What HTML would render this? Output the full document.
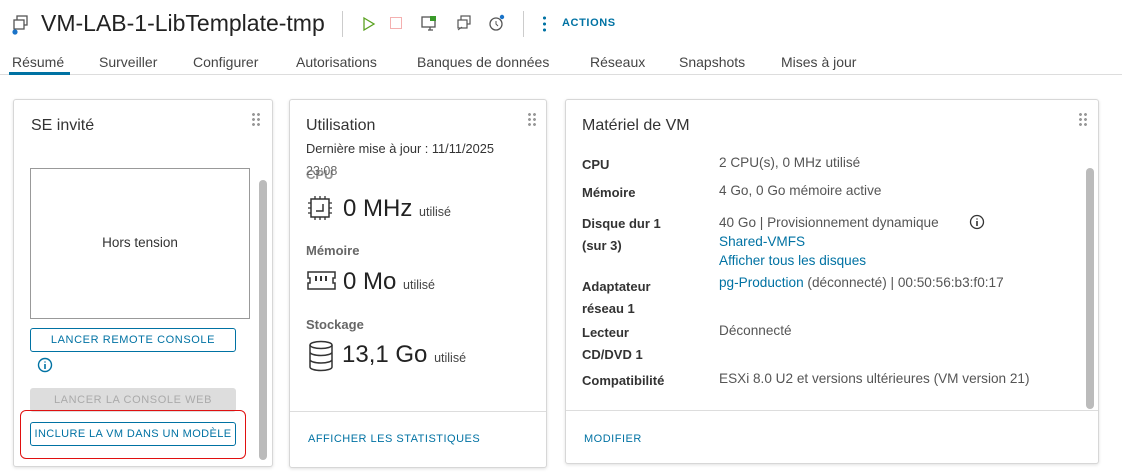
<!DOCTYPE html>
<html><head><meta charset="utf-8"><style>
*{box-sizing:border-box;margin:0;padding:0}
body{width:1122px;height:474px;overflow:hidden;background:#fff;font-family:"Liberation Sans",sans-serif;color:#333;position:relative}
.a{position:absolute;white-space:nowrap}
.card{position:absolute;background:#fff;border:1px solid #d7d7d7;border-radius:3px;box-shadow:0 1px 3px rgba(0,0,0,.12)}
.ttl{font-size:16px;color:#333}
.lbl{font-size:13px;color:#333;font-weight:bold}
.val{font-size:13.6px;color:#555}
.lnk{color:#0072a3}
.btn{position:absolute;border:1px solid #0072a3;border-radius:3px;color:#0072a3;font-size:11px;letter-spacing:.6px;text-align:center;line-height:22px;height:24px}
.dots{position:absolute;width:10px;height:14px;background:radial-gradient(circle,#999 1.3px,transparent 1.6px) 0 0/5px 5px}
.tab{position:absolute;top:54px;font-size:14px;color:#444}
</style></head><body>
<svg class="a" style="left:12px;top:13px" width="20" height="22" viewBox="0 0 20 22"><rect x="5" y="3" width="10" height="9" fill="none" stroke="#555" stroke-width="1.3"/><rect x="2" y="7" width="10" height="9" fill="#fff" stroke="#555" stroke-width="1.3"/><circle cx="3" cy="19" r="2.6" fill="#1a73c8"/></svg>
<div class="a" style="left:41px;top:10px;font-size:23px;color:#222">VM-LAB-1-LibTemplate-tmp</div>
<div class="a" style="left:342px;top:11px;width:1px;height:26px;background:#ccc"></div>
<svg class="a" style="left:362px;top:16px" width="14" height="16"><path d="M2 2 L12 8 L2 14Z" fill="none" stroke="#5aa220" stroke-width="1.3"/></svg>
<div class="a" style="left:390px;top:17px;width:12px;height:12px;border:1px solid #f4b0b0"></div>
<svg class="a" style="left:420px;top:14px" width="18" height="18"><rect x="2" y="3" width="13" height="10" fill="none" stroke="#555" stroke-width="1.3"/><path d="M8 16h5M10 13v3" stroke="#555" stroke-width="1.3"/><rect x="10" y="2" width="6" height="5" fill="#3a9a2a"/></svg>
<svg class="a" style="left:455px;top:14px" width="18" height="18"><rect x="6" y="2" width="9" height="8" fill="none" stroke="#555" stroke-width="1.2"/><rect x="3" y="6" width="9" height="8" fill="#fff" stroke="#555" stroke-width="1.2"/><path d="M3 16l4-3" stroke="#555"/></svg>
<svg class="a" style="left:488px;top:13px" width="18" height="20"><circle cx="8" cy="11" r="6" fill="none" stroke="#555" stroke-width="1.3"/><path d="M8 8v3l2 2" stroke="#555" fill="none"/><circle cx="14" cy="4" r="2.2" fill="#1a73c8"/></svg>
<div class="a" style="left:523px;top:11px;width:1px;height:26px;background:#ccc"></div>
<div class="a" style="left:543px;top:15px;width:3px;height:17px;background:radial-gradient(circle,#0072a3 1.4px,transparent 1.7px) 0 0/3px 6px"></div>
<div class="a" style="left:562px;top:17px;font-size:11px;color:#0072a3;letter-spacing:.6px;font-weight:bold">ACTIONS</div>
<div class="tab" style="left:12px">Résumé</div>
<div class="tab" style="left:99px">Surveiller</div>
<div class="tab" style="left:193px">Configurer</div>
<div class="tab" style="left:296px">Autorisations</div>
<div class="tab" style="left:417px">Banques de données</div>
<div class="tab" style="left:590px">Réseaux</div>
<div class="tab" style="left:679px">Snapshots</div>
<div class="tab" style="left:781px">Mises à jour</div>
<div class="a" style="left:0;top:74px;width:1122px;height:1px;background:#ddd"></div>
<div class="a" style="left:9px;top:72px;width:61px;height:3px;background:#0072a3"></div>

<div class="card" style="left:13px;top:99px;width:260px;height:368px">
 <div class="a ttl" style="left:17px;top:17px">SE invité</div>
 <div class="dots" style="left:237px;top:12px"></div>
 <div class="a" style="left:245px;top:80px;width:8px;height:280px;background:#bbb;border-radius:4px"></div>
 <div class="a" style="left:16px;top:68px;width:220px;height:151px;border:1px solid #999;text-align:center;line-height:148px;font-size:13.5px;color:#333">Hors tension</div>
 <div class="btn" style="left:16px;top:228px;width:206px">LANCER REMOTE CONSOLE</div>
 <svg class="a" style="left:23px;top:257px" width="16" height="16"><circle cx="8" cy="8" r="6.5" fill="none" stroke="#0072a3" stroke-width="1.4"/><path d="M8 7v5M8 4.5v1" stroke="#0072a3" stroke-width="1.6"/></svg>
 <div class="btn" style="left:16px;top:288px;width:206px;background:#ddd;border-color:#ddd;color:#aaa">LANCER LA CONSOLE WEB</div>
 <div class="a" style="left:6px;top:310px;width:226px;height:49px;border:1.5px solid #e01010;border-radius:6px"></div>
 <div class="btn" style="left:16px;top:322px;width:206px;letter-spacing:.4px">INCLURE LA VM DANS UN MODÈLE</div>
</div>

<div class="card" style="left:289px;top:99px;width:258px;height:369px">
 <div class="a ttl" style="left:16px;top:17px">Utilisation</div>
 <div class="dots" style="left:237px;top:12px"></div>
 <div class="a" style="left:16px;top:41px;font-size:12.8px;color:#333">Dernière mise à jour : 11/11/2025</div>
 <div class="a" style="left:16px;top:64px;font-size:12.5px;color:#666">23:08</div>
 <div class="a" style="left:16px;top:67px;font-size:13px;color:#666;font-weight:bold;opacity:.7">CPU</div>
 <svg class="a" style="left:17px;top:96px" width="28" height="26"><rect x="4" y="3" width="18" height="18" fill="none" stroke="#333" stroke-width="1.5"/><path d="M9 15h7V8" fill="none" stroke="#333" stroke-width="1.5"/><path d="M1 7h3M1 12h3M1 17h3M22 7h3M22 12h3M22 17h3M8 0v3M13 0v3M18 0v3M8 21v3M13 21v3M18 21v3" stroke="#333" stroke-width="1.3"/></svg>
 <div class="a" style="left:53px;top:95px;font-size:24px;color:#222">0 MHz <span style="font-size:12.5px;color:#444">utilisé</span></div>
 <div class="a lbl" style="left:16px;top:143px;color:#666">Mémoire</div>
 <svg class="a" style="left:17px;top:170px" width="30" height="22"><path d="M1 2h27v6h-2v5h2v6H1v-6h2V8H1z" fill="none" stroke="#333" stroke-width="1.5"/><path d="M9 6v5M14 6v5M19 6v5" stroke="#333" stroke-width="2"/></svg>
 <div class="a" style="left:53px;top:168px;font-size:24px;color:#222">0 Mo <span style="font-size:12.5px;color:#444">utilisé</span></div>
 <div class="a lbl" style="left:16px;top:217px;color:#666">Stockage</div>
 <svg class="a" style="left:18px;top:240px" width="28" height="32"><ellipse cx="13" cy="5" rx="11" ry="3.5" fill="none" stroke="#333" stroke-width="1.5"/><path d="M2 5v22c0 2 5 3.5 11 3.5s11-1.5 11-3.5V5M2 12c0 2 5 3.5 11 3.5s11-1.5 11-3.5M2 19.5c0 2 5 3.5 11 3.5s11-1.5 11-3.5" fill="none" stroke="#333" stroke-width="1.5"/></svg>
 <div class="a" style="left:52px;top:241px;font-size:24px;color:#222">13,1 Go <span style="font-size:12.5px;color:#444">utilisé</span></div>
 <div class="a" style="left:0;top:311px;width:256px;height:1px;background:#ddd"></div>
 <div class="a" style="left:18px;top:333px;font-size:11px;color:#0072a3;letter-spacing:.5px">AFFICHER LES STATISTIQUES</div>
</div>

<div class="card" style="left:565px;top:99px;width:534px;height:365px">
 <div class="a ttl" style="left:16px;top:17px">Matériel de VM</div>
 <div class="dots" style="left:512px;top:12px"></div>
 <div class="a" style="left:520px;top:68px;width:8px;height:241px;background:#bbb;border-radius:4px"></div>
 <div class="a lbl" style="left:16px;top:57px">CPU</div><div class="a val" style="left:153px;top:55px">2 CPU(s), 0 MHz utilisé</div>
 <div class="a lbl" style="left:16px;top:85px">Mémoire</div><div class="a val" style="left:153px;top:83px">4 Go, 0 Go mémoire active</div>
 <div class="a lbl" style="left:16px;top:113px;line-height:22px">Disque dur 1<br>(sur 3)</div>
 <div class="a val" style="left:153px;top:113px;line-height:19px">40 Go | Provisionnement dynamique<br><span class="lnk">Shared-VMFS</span><br><span class="lnk">Afficher tous les disques</span></div>
 <svg class="a" style="left:403px;top:114px" width="16" height="16"><circle cx="8" cy="8" r="6.5" fill="none" stroke="#333" stroke-width="1.3"/><path d="M8 7v5M8 4.5v1" stroke="#333" stroke-width="1.6"/></svg>
 <div class="a lbl" style="left:16px;top:176px;line-height:22px">Adaptateur<br>réseau 1</div>
 <div class="a val" style="left:153px;top:175px"><span class="lnk">pg-Production</span> (déconnecté) | 00:50:56:b3:f0:17</div>
 <div class="a lbl" style="left:16px;top:222px;line-height:22px">Lecteur<br>CD/DVD 1</div>
 <div class="a val" style="left:153px;top:223px">Déconnecté</div>
 <div class="a lbl" style="left:16px;top:273px">Compatibilité</div>
 <div class="a val" style="left:153px;top:271px">ESXi 8.0 U2 et versions ultérieures (VM version 21)</div>
 <div class="a" style="left:0;top:310px;width:532px;height:1px;background:#ddd"></div>
 <div class="a" style="left:18px;top:333px;font-size:11px;color:#0072a3;letter-spacing:.5px">MODIFIER</div>
</div>
</body></html>
